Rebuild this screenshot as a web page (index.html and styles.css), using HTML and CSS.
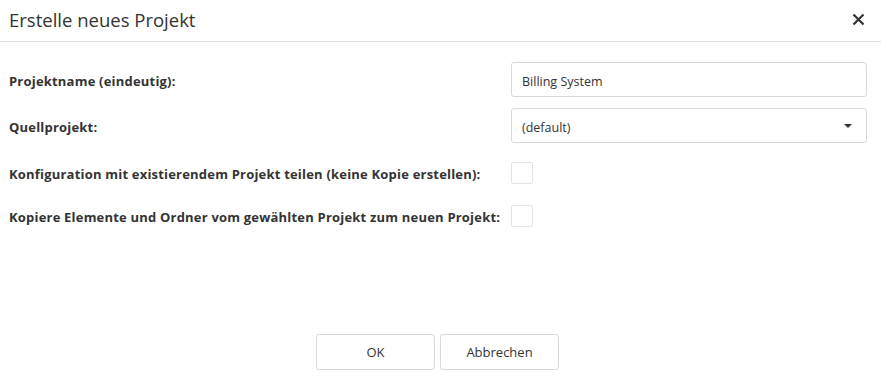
FILE: index.html
```html
<!DOCTYPE html>
<html lang="de">
<head>
<meta charset="utf-8">
<title>Erstelle neues Projekt</title>
<link rel="stylesheet" href="styles.css">
</head>
<body>
<div class="dialog">
  <header class="dialog-header">
    <h1 class="dialog-title">Erstelle neues Projekt</h1>
    <button class="close-btn" aria-label="Schließen">
      <svg width="13" height="13" viewBox="0 0 13 13"><path d="M1.5 1.5 L11.5 11.5 M11.5 1.5 L1.5 11.5" stroke="#333" stroke-width="2.2" fill="none"/></svg>
    </button>
  </header>
  <main class="dialog-body">
    <div class="form-row field-row">
      <label class="form-label">Projektname (eindeutig):</label>
      <div class="form-control"><div class="text-input">Billing System</div></div>
    </div>
    <div class="form-row field-row">
      <label class="form-label">Quellprojekt:</label>
      <div class="form-control">
        <div class="text-input select">(default)<span class="caret"></span></div>
      </div>
    </div>
    <div class="form-row check-row">
      <label class="form-label">Konfiguration mit existierendem Projekt teilen (keine Kopie erstellen):</label>
      <div class="form-control"><span class="checkbox"></span></div>
    </div>
    <div class="form-row check-row">
      <label class="form-label">Kopiere Elemente und Ordner vom gewählten Projekt zum neuen Projekt:</label>
      <div class="form-control"><span class="checkbox"></span></div>
    </div>
  </main>
  <footer class="dialog-footer">
    <button class="btn">OK</button>
    <button class="btn">Abbrechen</button>
  </footer>
</div>
</body>
</html>
```
FILE: styles.css
```css
* { box-sizing: border-box; }
html, body { margin: 0; padding: 0; height: 100%; background: #fff; }
body {
  font-family: "Open Sans", "Liberation Sans", sans-serif;
  color: #333;
}
.dialog { height: 100%; display: flex; flex-direction: column; }
.dialog-header {
  height: 42px;
  border-bottom: 1px solid #dedede;
  display: flex;
  align-items: center;
  justify-content: space-between;
  padding: 0 16px 2px 9px;
}
.dialog-title {
  margin: 0;
  font-size: 18.5px;
  font-weight: 400;
  color: #333;
}
.close-btn {
  border: 0;
  background: none;
  padding: 0;
  width: 13px;
  height: 13px;
  display: flex;
}
.dialog-body {
  padding: 20px 14px 0 9px;
  display: flex;
  flex-direction: column;
}
.form-row {
  display: flex;
  align-items: center;
}
.field-row { height: 35px; margin-bottom: 11px; }
.field-row:nth-child(2) { margin-bottom: 8px; }
.check-row { height: 43px; }
.form-label {
  flex: 1;
  font-weight: 700;
  font-size: 13px;
  letter-spacing: 0.2px;
  color: #333;
  padding-top: 2px;
}
.form-control { width: 356px; display: flex; align-items: center; }
.text-input {
  width: 100%;
  height: 35px;
  border: 1px solid #d9d9d9;
  border-radius: 3px;
  padding: 3px 10px 0;
  display: flex;
  align-items: center;
  font-size: 12.5px;
  color: #333;
}
.select { justify-content: space-between; padding-right: 14px; }
.caret {
  width: 0; height: 0;
  border-left: 4px solid transparent;
  border-right: 4px solid transparent;
  border-top: 4px solid #333;
  margin-top: -2px;
}
.checkbox {
  width: 22px;
  height: 22px;
  border: 1px solid #e3e3e3;
  border-radius: 2px;
  background: #fff;
}
.dialog-footer {
  margin-top: auto;
  padding-bottom: 16px;
  display: flex;
  justify-content: center;
  gap: 5px;
  padding-right: 6px;
}
.btn {
  width: 119px;
  height: 36px;
  border: 1px solid #d9d9d9;
  border-radius: 3px;
  background: #fff;
  font-family: inherit;
  font-size: 13px;
  color: #333;
}
```
